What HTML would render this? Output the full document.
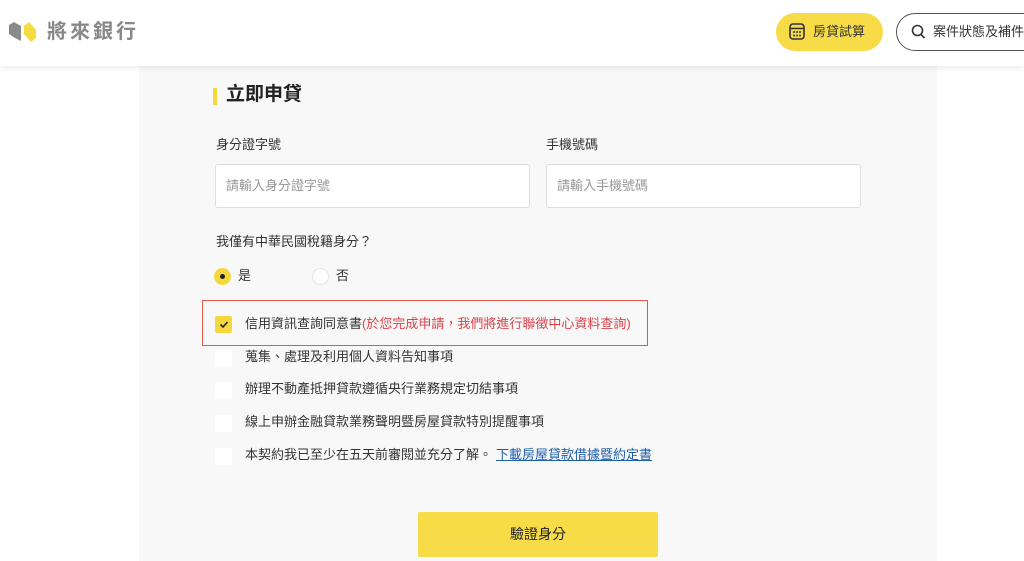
<!DOCTYPE html>
<html><head><meta charset="utf-8"><style>
*{margin:0;padding:0;box-sizing:border-box}
body{width:1024px;height:561px;overflow:hidden;background:#fff;font-family:"Liberation Sans","Noto Sans CJK TC",sans-serif;color:#333;position:relative}
.hdr{position:absolute;left:0;top:0;width:1024px;height:66px;background:#fff;box-shadow:0 2px 6px rgba(0,0,0,.08);z-index:2}
.card{position:absolute;left:139px;top:66px;width:798px;height:495px;background:#f8f8f8}
.abs{position:absolute;line-height:1.2}
.lbl{font-size:13px;color:#333}
.inp{position:absolute;height:44px;width:315px;background:#fff;border:1px solid #ddd;border-radius:3px;font-size:13px;color:#999;padding:13px 10px;line-height:1.2}
.cb{position:absolute;left:215px;width:17px;height:17px;background:#fff;border-radius:2px}
.ct{position:absolute;left:245px;font-size:13px;color:#333;line-height:1.2}
</style></head><body>
<div class="hdr">
 <svg class="abs" style="left:9px;top:22px" width="28" height="20" viewBox="0 0 28 20"><path d="M0 3 L5 0 L12 4 L12 19 L6 16 L0 12Z" fill="#8a8a8a"/><path d="M15 4 L20 0 L27 8 L27 16 L22 20 L15 12Z" fill="#f5dc45"/></svg>
 <div class="abs" style="left:47px;top:20px;font-size:20px;color:#888;letter-spacing:3px;font-weight:bold">將來銀行</div>
 <div class="abs" style="left:776px;top:13px;width:107px;height:38px;border-radius:19px;background:#f7dc48"></div>
 <svg class="abs" style="left:789px;top:23px" width="16" height="17" viewBox="0 0 16 17"><rect x="1" y="1" width="14" height="15" rx="3" fill="none" stroke="#333" stroke-width="1.6"/><line x1="1" y1="5.5" x2="15" y2="5.5" stroke="#333" stroke-width="1.5"/><g fill="#333"><circle cx="5" cy="9" r="1"/><circle cx="8" cy="9" r="1"/><circle cx="11" cy="9" r="1"/><circle cx="5" cy="12.5" r="1"/><circle cx="8" cy="12.5" r="1"/><circle cx="11" cy="12.5" r="1"/></g></svg>
 <div class="abs" style="left:813px;top:24px;font-size:13px;color:#333">房貸試算</div>
 <div class="abs" style="left:896px;top:13px;width:160px;height:38px;border-radius:19px;border:1.5px solid #555;background:#fff"></div>
 <svg class="abs" style="left:911px;top:24px" width="15" height="16" viewBox="0 0 15 16"><circle cx="6.5" cy="6.5" r="5" fill="none" stroke="#333" stroke-width="1.6"/><line x1="10" y1="10.5" x2="13.5" y2="14" stroke="#333" stroke-width="1.6"/></svg>
 <div class="abs" style="left:933px;top:24px;font-size:13px;color:#333;white-space:nowrap">案件狀態及補件查詢</div>
</div>
<div class="card"></div>
<div class="abs" style="left:213px;top:88px;width:4px;height:17px;background:#f5d93c"></div>
<div class="abs" style="left:226px;top:84px;font-size:19px;font-weight:bold;color:#222">立即申貸</div>
<div class="abs lbl" style="left:216px;top:137px">身分證字號</div>
<div class="abs lbl" style="left:546px;top:137px">手機號碼</div>
<div class="inp" style="left:215px;top:164px">請輸入身分證字號</div>
<div class="inp" style="left:546px;top:164px">請輸入手機號碼</div>
<div class="abs lbl" style="left:216px;top:234px">我僅有中華民國稅籍身分？</div>
<div class="abs" style="left:214px;top:268px;width:17px;height:17px;border-radius:50%;background:#f5d93c"></div>
<div class="abs" style="left:220px;top:274px;width:5px;height:5px;border-radius:50%;background:#222"></div>
<div class="abs lbl" style="left:238px;top:268px">是</div>
<div class="abs" style="left:312px;top:268px;width:17px;height:17px;border-radius:50%;background:#fff;border:1px solid #e5e5e5"></div>
<div class="abs lbl" style="left:336px;top:268px">否</div>
<div class="abs" style="left:202px;top:300px;width:446px;height:46px;border:1.5px solid #e8574a"></div>
<div class="cb" style="top:316px;background:#f5d93c"></div>
<svg class="abs" style="left:219px;top:320px" width="10" height="9" viewBox="0 0 10 9"><path d="M1.5 4.5 L4 7 L8.5 2" fill="none" stroke="#222" stroke-width="1.6"/></svg>
<div class="ct" style="top:316px">信用資訊查詢同意書<span style="color:#d9434b">(於您完成申請，我們將進行聯徵中心資料查詢)</span></div>
<div class="cb" style="top:350px"></div><div class="ct" style="top:349px">蒐集、處理及利用個人資料告知事項</div>
<div class="cb" style="top:382px"></div><div class="ct" style="top:381px">辦理不動產抵押貸款遵循央行業務規定切結事項</div>
<div class="cb" style="top:415px"></div><div class="ct" style="top:414px">線上申辦金融貸款業務聲明暨房屋貸款特別提醒事項</div>
<div class="cb" style="top:448px"></div><div class="ct" style="top:447px">本契約我已至少在五天前審閱並充分了解。<span style="color:#1d5fa8;text-decoration:underline;margin-left:4px">下載房屋貸款借據暨約定書</span></div>
<div class="abs" style="left:418px;top:512px;width:240px;height:45px;background:#f7dc48;border-radius:2px;font-size:14px;text-align:center;line-height:45px;color:#222">驗證身分</div>
</body></html>
